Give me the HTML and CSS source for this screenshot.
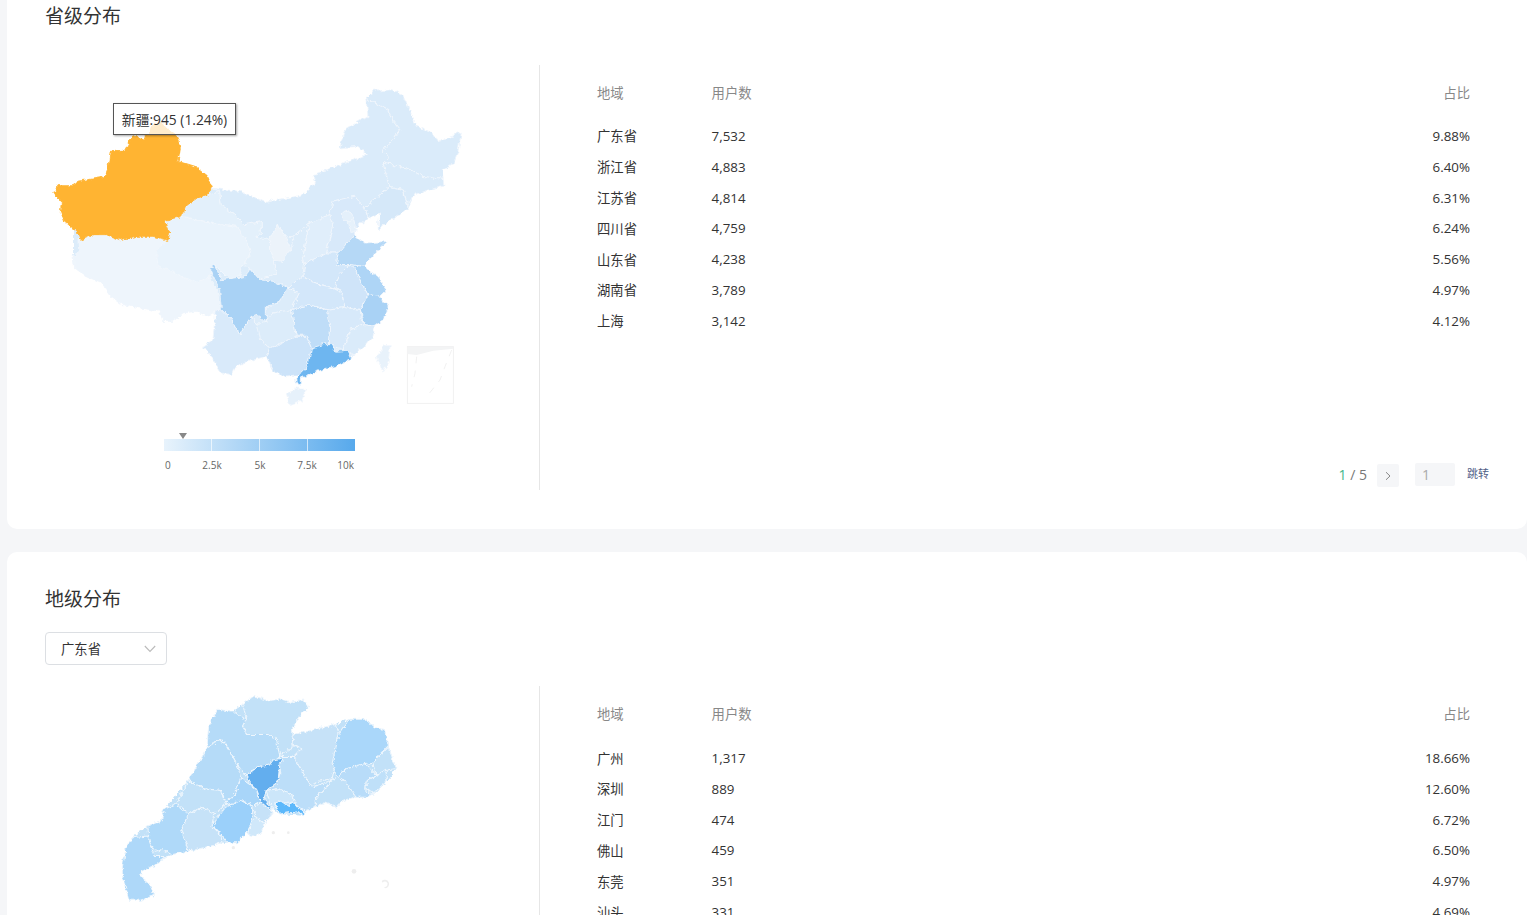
FILE: index.html
```html
<!DOCTYPE html>
<html lang="zh-CN">
<head>
<meta charset="utf-8">
<title>用户地域分布</title>
<link rel="stylesheet" href="styles.css">
</head>
<body>
<main class="page">
  <section class="card">
    <h2 class="card-title">省级分布</h2>
    <div class="panel-row panel-row-province">
      <div class="chart-col">
        <div class="tooltip">新疆:945 (1.24%)</div>
        <svg class="map-china" viewBox="0 0 1320 1020" width="440" height="340" role="img" aria-label="中国地图">
          <defs>
            <filter id="rough" x="-3%" y="-3%" width="106%" height="106%" filterUnits="objectBoundingBox" primitiveUnits="userSpaceOnUse">
              <feTurbulence type="turbulence" baseFrequency="0.045" numOctaves="2" seed="4" result="n"/>
              <feDisplacementMap in="SourceGraphic" in2="n" scale="13" xChannelSelector="R" yChannelSelector="G" result="d"/>
              <feGaussianBlur in="d" stdDeviation="0.9"/>
            </filter>
          </defs>
          <g transform="translate(-4 -4)" filter="url(#rough)" stroke="#f2f7fc" stroke-width="2.5" stroke-linejoin="round">
            <path fill="#dcecfa" stroke="none" d="M100 530 105 565 140 590 185 610 215 650 250 675 300 685 360 695 370 725 400 725 430 700 470 695 500 710 530 690 525 720 520 780 490 800 520 840 545 880 575 885 585 860 625 845 680 830 700 870 730 890 780 885 805 860 860 865 890 860 935 835 940 825 975 800 1000 770 1005 740 1030 720 1045 680 1020 650 1040 630 1015 590 985 570 975 560 1000 525 1045 485 975 490 945 465 945 450 985 415 1020 400 1015 450 1040 430 1105 385 1125 345 1213 318 1208 272 1240 255 1255 215 1265 160 1195 185 1180 160 1130 140 1115 100 1090 50 1060 30 1000 35 978 55 985 110 915 150 900 205 955 200 980 225 890 260 820 285 825 310 790 345 680 368 600 335 510 325 200 300 100 400Z"/>
            <path fill="#eef5fc" d="M115 482 160 465 200 465 240 480 290 470 340 470 385 482 350 510 355 560 400 575 470 610 510 590 535 640 540 690 500 710 470 695 430 700 400 725 370 725 360 695 300 685 250 675 215 650 185 610 140 590 105 565 100 530 118 520Z"/>
            <path fill="#e9f3fc" d="M375 422 428 410 470 420 530 430 590 440 625 490 632 520 610 560 600 590 570 600 525 555 510 590 470 610 400 575 355 560 350 510 385 482 390 460Z"/>
            <path fill="#e3f0fb" d="M430 410 440 378 470 355 510 345 540 335 545 375 585 405 615 435 665 425 665 460 650 470 690 480 690 510 700 540 710 580 660 600 630 565 610 560 632 520 625 490 590 440 530 430 470 420Z"/>
            <path fill="#daebfa" d="M510 325 600 335 680 368 790 345 825 310 820 285 890 260 980 225 955 200 900 205 915 150 985 110 978 55 1045 90 1060 125 1080 150 1030 215 1050 232 1030 250 1050 320 975 385 945 350 880 365 870 405 810 430 760 470 735 472 715 430 690 480 650 470 665 460 665 425 615 435 585 405 545 375 540 335Z"/>
            <path fill="#daebfa" d="M978 55 1000 35 1060 30 1090 50 1115 100 1130 140 1180 160 1195 185 1265 160 1255 215 1240 255 1208 272 1210 300 1150 290 1100 265 1060 258 1030 250 1050 232 1030 215 1080 150 1060 125 1045 90Z"/>
            <path fill="#daebfa" d="M1030 250 1060 258 1100 265 1150 290 1210 300 1213 318 1165 332 1125 345 1105 378 1090 330 1050 320Z"/>
            <path fill="#d5e8f9" d="M975 385 1050 320 1090 330 1105 385 1040 430 1015 450 1020 400 985 415Z"/>
            <path fill="#d8e9fa" d="M880 365 945 350 975 385 985 415 945 450 945 465 895 520 860 520 880 430 870 405Z"/>
            <path fill="#e4f0fb" d="M905 400 925 392 942 415 930 425 910 425Z"/>
            <path fill="#e6f1fb" d="M925 425 942 418 950 455 935 458Z"/>
            <path fill="#e0eefb" d="M810 430 870 405 880 430 860 520 795 555 790 530 800 470Z"/>
            <path fill="#dcecfa" d="M760 470 810 430 800 470 790 530 795 555 790 590 770 600 745 625 700 605 660 600 710 580 700 540 755 510Z"/>
            <path fill="#ecf3fa" d="M690 480 715 430 735 472 755 510 730 545 700 540 690 510Z"/>
            <path fill="#b5d8f6" d="M895 520 945 465 975 490 1045 485 1000 525 975 560 925 555 890 555Z"/>
            <path fill="#d3e7fa" d="M795 555 860 520 895 520 890 555 925 555 895 590 885 625 820 610 790 590Z"/>
            <path fill="#aed5f6" d="M925 555 975 560 985 570 1015 590 1040 630 1020 650 985 645 965 610 945 565Z"/>
            <path fill="#cfe4f9" d="M895 590 925 555 945 565 965 610 985 645 962 690 915 680 905 635 885 625Z"/>
            <path fill="#d3e7fa" d="M770 600 790 590 820 610 885 625 905 635 915 680 860 690 810 675 755 690 780 640 745 625Z"/>
            <path fill="#dcecfa" d="M680 680 715 670 745 625 780 640 755 690 745 700 700 700 680 725Z"/>
            <path fill="#a9d2f5" d="M510 565 525 555 545 600 620 590 630 565 660 600 700 605 745 625 715 670 680 680 680 725 650 705 635 710 600 765 575 720 545 690 540 630Z"/>
            <path fill="#a9d2f5" d="M985 645 1020 650 1045 680 1030 720 1005 740 975 735 962 690Z"/>
            <path fill="#d7e9fa" d="M860 690 915 680 962 690 965 720 975 735 930 750 910 810 865 800 870 740Z"/>
            <path fill="#bfddf8" d="M755 690 810 675 860 690 870 740 865 800 815 805 800 770 770 770Z"/>
            <path fill="#daebfa" d="M930 750 975 735 1005 740 1000 770 975 800 940 825 910 810Z"/>
            <path fill="#dcecfa" d="M635 735 680 725 700 700 755 690 770 770 690 805 660 780Z"/>
            <path fill="#d9eafa" d="M530 690 545 690 575 720 600 765 635 710 650 735 660 780 690 805 680 830 625 845 585 860 575 885 545 880 520 840 490 800 520 780 525 720Z"/>
            <path fill="#cce3f9" d="M690 805 770 770 800 770 815 805 805 860 780 885 730 890 700 870 680 830Z"/>
            <path fill="#6eb6f0" d="M815 805 850 795 880 795 885 815 925 812 935 835 890 860 860 865 820 880 785 895 785 915 775 920 768 900 790 875 805 860Z"/>
            <path fill="#e6f1fb" d="M740 945 770 925 800 930 785 965 750 975Z"/>
            <path fill="#e8f2fb" d="M1010 830 1035 795 1052 795 1045 850 1030 878Z"/>
            <path fill="#ffb432" stroke="#ffb432" d="M45 340 55 318 95 318 115 305 195 292 205 265 212 212 255 212 280 165 310 178 328 165 335 140 360 125 385 150 412 170 422 205 415 245 470 262 500 285 515 322 505 345 470 355 440 375 428 410 375 422 390 460 385 482 340 470 290 470 240 480 200 465 160 465 120 482 110 455 75 425 62 395 65 370Z"/>
          </g>
          <g fill="none" stroke="#eeeeee" stroke-width="2.5">
            <rect x="1102" y="800" width="138" height="170"/>
            <path fill="#f3f4f5" stroke="none" d="M1102 800H1240V806L1180 812 1130 825 1102 822Z"/>
            <path stroke-dasharray="20 22" d="M1130 830 1125 880 1115 920M1235 810 1215 860 1200 900 1160 950"/>
          </g>
        </svg>
        <div class="legend">
          <span class="legend-marker"></span>
          <div class="legend-bar">
            <span class="legend-seg"></span>
            <span class="legend-seg"></span>
            <span class="legend-seg"></span>
            <span class="legend-seg"></span>
          </div>
          <div class="legend-labels">
            <span>0</span><span>2.5k</span><span>5k</span><span>7.5k</span><span>10k</span>
          </div>
        </div>
      </div>
      <div class="table-col">
        <div class="table">
          <div class="t-head"><span class="c-region">地域</span><span class="c-users">用户数</span><span class="c-share">占比</span></div>
          <div class="t-row"><span class="c-region">广东省</span><span class="c-users">7,532</span><span class="c-share">9.88%</span></div>
          <div class="t-row"><span class="c-region">浙江省</span><span class="c-users">4,883</span><span class="c-share">6.40%</span></div>
          <div class="t-row"><span class="c-region">江苏省</span><span class="c-users">4,814</span><span class="c-share">6.31%</span></div>
          <div class="t-row"><span class="c-region">四川省</span><span class="c-users">4,759</span><span class="c-share">6.24%</span></div>
          <div class="t-row"><span class="c-region">山东省</span><span class="c-users">4,238</span><span class="c-share">5.56%</span></div>
          <div class="t-row"><span class="c-region">湖南省</span><span class="c-users">3,789</span><span class="c-share">4.97%</span></div>
          <div class="t-row"><span class="c-region">上海</span><span class="c-users">3,142</span><span class="c-share">4.12%</span></div>
        </div>
        <div class="pager">
          <span class="pager-count"><b>1</b> / 5</span>
          <button class="pager-next" type="button" aria-label="下一页">
            <svg viewBox="0 0 10 10" width="10" height="10"><path d="M3 1.2 7 5 3 8.8" fill="none" stroke="#888" stroke-width="1"/></svg>
          </button>
          <span class="pager-input">1</span>
          <span class="pager-jump">跳转</span>
        </div>
      </div>
    </div>
  </section>

  <section class="card">
    <h2 class="card-title">地级分布</h2>
    <div class="select">
      <span>广东省</span>
      <svg viewBox="0 0 12 8" width="12" height="8"><path d="M.8 1 6 6.4 11.2 1" fill="none" stroke="#bbb" stroke-width="1.1"/></svg>
    </div>
    <div class="panel-row panel-row-city">
      <div class="chart-col chart-col-city">
        <svg class="map-gd" viewBox="0 0 930 690" width="310" height="230" role="img" aria-label="广东省地图">
          <defs>
            <filter id="rough-gd" x="-3%" y="-3%" width="106%" height="106%" primitiveUnits="userSpaceOnUse">
              <feTurbulence type="turbulence" baseFrequency="0.06" numOctaves="2" seed="9" result="n"/>
              <feDisplacementMap in="SourceGraphic" in2="n" scale="12" xChannelSelector="R" yChannelSelector="G" result="d"/>
              <feGaussianBlur in="d" stdDeviation="0.8"/>
            </filter>
          </defs>
          <g transform="translate(-7 -9.5) scale(1.015)" filter="url(#rough-gd)" stroke="#eef6fd" stroke-width="3" stroke-linejoin="round">
            <path fill="#c2e1f8" stroke="none" d="M80 490 100 455 145 420 185 405 195 370 265 285 295 235 320 190 325 125 350 75 395 80 425 60 460 35 500 50 540 45 570 55 605 45 620 70 590 100 570 135 575 150 640 135 700 120 740 105 790 105 815 130 845 135 855 180 880 250 850 290 815 325 790 335 760 335 720 345 705 365 670 350 640 365 610 375 605 390 535 385 515 370 490 410 480 440 450 455 440 440 410 470 365 470 330 480 265 495 215 505 200 510 160 540 125 555 125 570 150 590 165 625 125 640 90 640 70 570 70 540Z"/>
            <path fill="#c2e1f8" d="M425 60 460 35 500 50 540 45 570 55 605 45 620 70 590 100 570 135 575 185 535 215 525 165 500 150 440 150 425 125 435 95Z"/>
            <path fill="#b5dbf8" d="M350 75 395 80 435 105 425 125 440 150 500 150 525 165 535 215 510 240 470 245 435 270 410 240 380 185 360 165 320 190 325 125Z"/>
            <path fill="#c6e2f8" d="M575 150 640 135 700 120 715 155 700 235 690 280 640 290 630 305 590 245 575 215 600 190 575 180Z"/>
            <path fill="#aad7fa" d="M740 105 790 105 815 130 845 135 855 180 810 235 735 250 705 275 690 235 710 150Z"/>
            <path fill="#c2e1f8" d="M855 185 880 250 855 255 820 270 810 235Z"/>
            <path fill="#b8dcf9" d="M705 275 735 250 790 235 820 270 790 290 790 320 815 325 790 335 760 335 725 285Z"/>
            <path fill="#bfe0f9" d="M795 285 850 255 850 290 815 320 790 310Z"/>
            <path fill="#c2e1f8" d="M640 340 690 285 705 275 725 285 760 335 720 345 705 365 670 350 640 365Z"/>
            <path fill="#bcdef9" d="M535 215 575 215 630 305 690 285 640 340 640 365 610 375 590 365 570 325 530 310 495 315 530 290 535 265Z"/>
            <path fill="#cce6fa" d="M495 315 530 310 570 325 575 350 530 350 515 375Z"/>
            <path fill="#b5dbf8" d="M265 285 295 235 320 190 360 165 380 185 410 240 420 280 405 325 375 350 360 315 310 310Z"/>
            <path fill="#c2e1f8" d="M230 355 265 285 310 310 360 315 375 355 340 385 305 365 265 385Z"/>
            <path fill="#a8d5f9" d="M375 352 405 325 420 275 435 290 465 310 480 350 455 362 430 345 395 360Z"/>
            <path fill="#9bd0fa" d="M335 420 375 365 420 345 455 362 455 400 440 440 410 470 380 470 360 445Z"/>
            <path fill="#c6e2f8" d="M455 362 480 350 515 380 490 412 465 395Z"/>
            <path fill="#d0e8fa" d="M440 440 455 400 465 395 490 412 480 440 450 455Z"/>
            <path fill="#c6e2f8" d="M245 430 265 385 305 365 340 385 335 420 360 445 365 470 330 480 265 495Z"/>
            <path fill="#afd9f9" d="M145 420 185 405 195 370 230 355 265 385 245 430 265 495 215 505 190 490 170 495 150 470Z"/>
            <path fill="#aed8f9" d="M80 490 100 455 145 450 165 510 200 510 160 540 125 555 125 570 150 590 165 625 125 640 90 640 70 570 70 540Z"/>
            <path fill="#63aeee" d="M435 272 470 245 505 240 515 225 545 220 535 240 530 290 495 315 490 335 515 380 480 350 465 310 445 290Z"/>
            <path fill="#5cb8fb" d="M520 352 535 345 560 362 575 350 590 368 605 372 605 390 590 378 535 385Z"/>
          </g>
          <g fill="#eeeeee">
            <circle cx="762" cy="556" r="7"/>
            <path d="M845 585a13 13 0 1 1 10 22l-3-5a8 8 0 1 0-4-12Z"/>
            <circle cx="520" cy="440" r="5"/>
            <circle cx="565" cy="440" r="4"/>
            <circle cx="400" cy="485" r="5"/>
          </g>
        </svg>
      </div>
      <div class="table-col">
        <div class="table">
          <div class="t-head"><span class="c-region">地域</span><span class="c-users">用户数</span><span class="c-share">占比</span></div>
          <div class="t-row"><span class="c-region">广州</span><span class="c-users">1,317</span><span class="c-share">18.66%</span></div>
          <div class="t-row"><span class="c-region">深圳</span><span class="c-users">889</span><span class="c-share">12.60%</span></div>
          <div class="t-row"><span class="c-region">江门</span><span class="c-users">474</span><span class="c-share">6.72%</span></div>
          <div class="t-row"><span class="c-region">佛山</span><span class="c-users">459</span><span class="c-share">6.50%</span></div>
          <div class="t-row"><span class="c-region">东莞</span><span class="c-users">351</span><span class="c-share">4.97%</span></div>
          <div class="t-row"><span class="c-region">汕头</span><span class="c-users">331</span><span class="c-share">4.69%</span></div>
        </div>
      </div>
    </div>
  </section>
</main>
</body>
</html>
```

FILE: styles.css
```css
* { box-sizing: border-box; }

html, body {
  margin: 0;
  height: 915px;
  overflow: hidden;
  background: #f5f6f8;
}

body {
  font-family: "Open Sans", "Noto Sans CJK SC", sans-serif;
  font-size: 13.33px;
  color: #333;
}

.page {
  margin-top: -30px;
  padding-left: 7px;
  display: flex;
  flex-direction: column;
  gap: 23px;
}

.card {
  background: #fff;
  border-radius: 10px;
  padding: 32px 0 39px;
  flex: none;
}

.card + .card { padding-top: 33px; }

.card-title {
  margin: 0 0 35px 38px;
  font-size: 19px;
  font-weight: 400;
  line-height: 28px;
  color: #333;
}

.select {
  width: 122px;
  height: 33px;
  margin: -16px 0 21px 38px;
  padding: 0 10px 0 15px;
  border: 1px solid #dcdfe3;
  border-radius: 4px;
  display: flex;
  align-items: center;
  justify-content: space-between;
  font-size: 13.33px;
  color: #333;
}

.panel-row {
  display: flex;
}

.panel-row-province { height: 425px; }
.panel-row-city { height: 400px; }

.chart-col {
  position: relative;
  width: 532px;
  flex: none;
  padding: 15px 0 0 33px;
}

.chart-col-city { padding: 0 0 0 93px; }

.map-china, .map-gd {
  display: block;
}

.tooltip {
  position: absolute;
  left: 106px;
  top: 38px;
  width: 123px;
  height: 32px;
  padding-top: 1px;
  border: 1px solid #555;
  background: rgba(255, 255, 255, .75);
  box-shadow: 1px 1px 2px rgba(0, 0, 0, .35);
  font-size: 13.8px;
  line-height: 30px;
  text-align: center;
  white-space: nowrap;
  color: #333;
}

.legend {
  position: relative;
  width: 191px;
  margin: 19px 0 0 124px;
}

.legend-marker {
  position: absolute;
  left: 15px;
  top: -6px;
  width: 0;
  height: 0;
  border-left: 4px solid transparent;
  border-right: 4px solid transparent;
  border-top: 6px solid #888;
}

.legend-bar {
  display: flex;
  height: 12px;
  background: linear-gradient(90deg, #e8f3fc, #57a9ec);
}

.legend-seg {
  flex: 1;
  border-left: 1px solid rgba(255, 255, 255, .65);
}

.legend-seg:first-child { border-left: 0; }

.legend-labels {
  display: grid;
  grid-template-columns: 28px 40px 56px 38px 29px;
  margin-top: 7px;
  font-size: 10px;
  line-height: 14px;
  color: #666;
  text-align: center;
}

.legend-labels span:first-child { text-align: left; padding-left: 1px; }
.legend-labels span:last-child { text-align: right; padding-right: 1px; }

.table-col {
  flex: 1;
  min-width: 0;
  border-left: 1px solid #e6e6e6;
  display: flex;
  flex-direction: column;
  justify-content: space-between;
  padding-top: 14px;
}

.table {
  padding: 0 57px;
}

.t-head, .t-row {
  display: flex;
  align-items: center;
}

.t-head {
  height: 26px;
  margin-bottom: 15.6px;
  color: #888;
}

.panel-row-city .t-head { margin-bottom: 16.7px; }

.t-row {
  height: 30.8px;
  color: #333;
}

.c-region { width: 114.6px; flex: none; }
.c-users { flex: 1; }
.c-share { text-align: right; }

.pager {
  display: flex;
  align-items: center;
  justify-content: flex-end;
  padding: 0 38px 3px 0;
  height: 26px;
  color: #777;
}

.pager-count { margin-bottom: 2px; font-size: 14px; }

.pager-count b {
  font-weight: 400;
  color: #3fb68b;
}

.pager-next {
  width: 22px;
  height: 23px;
  margin-left: 10px;
  padding: 0;
  border: 0;
  border-radius: 2px;
  background: #f5f6f8;
  display: flex;
  align-items: center;
  justify-content: center;
}

.pager-input {
  width: 40px;
  height: 23px;
  margin: 0 0 2px 16px;
  padding-left: 7px;
  background: #f5f6f8;
  border-radius: 2px;
  line-height: 23px;
  font-size: 14px;
  color: #aaa;
}

.pager-jump {
  margin: 0 0 5px 12px;
  font-size: 11px;
  color: #4f6086;
}
```
